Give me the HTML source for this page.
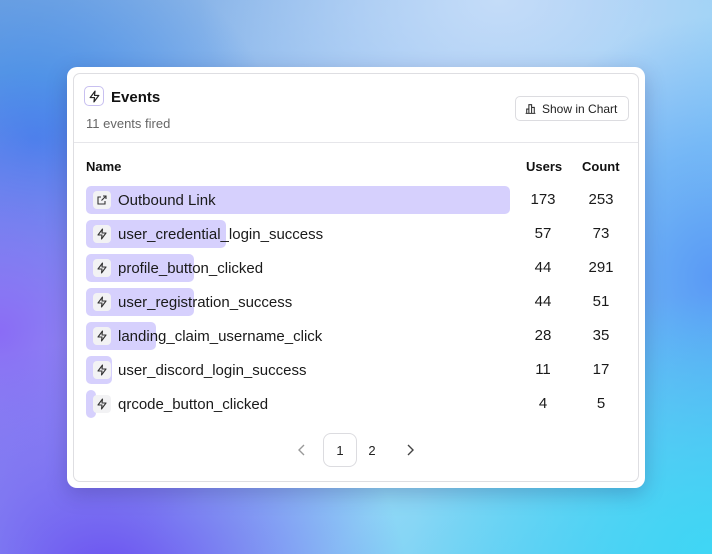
<!DOCTYPE html>
<html><head><style>
*{margin:0;padding:0;box-sizing:border-box}
body{width:712px;height:554px;overflow:hidden;font-family:"Liberation Sans",sans-serif;position:relative;
background:
radial-gradient(ellipse 300px 240px at 15% 105%,#6a4cf0 0%,rgba(106,76,240,0) 100%),
radial-gradient(ellipse 260px 260px at 0% 60%,#8a6cf5 0%,rgba(138,108,245,0) 100%),
radial-gradient(ellipse 240px 200px at 5% 25%,#3a86e8 0%,rgba(58,134,232,0) 100%),
radial-gradient(ellipse 300px 260px at 100% 100%,#3fd6f5 0%,rgba(63,214,245,0) 100%),
radial-gradient(ellipse 220px 260px at 100% 50%,#5a9af5 0%,rgba(90,154,245,0) 100%),
radial-gradient(ellipse 300px 200px at 70% 0%,#c4dcf8 0%,rgba(196,220,248,0) 100%),
linear-gradient(135deg,#7aa8e0 0%,#9ec6f4 40%,#8fd8f6 70%,#55c8f0 100%);}
.card{position:absolute;left:67px;top:67px;width:578px;height:421px;background:#fff;border-radius:10px;box-shadow:0 6px 20px rgba(40,30,100,.25)}
.inner{position:absolute;left:6px;top:6px;width:566px;height:409px;border:1px solid #dedee2;border-radius:7px}
.abs{position:absolute}
.t{color:#111;white-space:nowrap}
.bar{position:absolute;left:86px;height:28px;background:#d6d0fd;border-radius:5px}
.ib{position:absolute;left:93px;width:18px;height:18px;background:#f2f2f4;border-radius:4px;display:flex;align-items:center;justify-content:center}
.nm{position:absolute;left:118px;font-size:15px;color:#1a1a1a}
.num{position:absolute;font-size:15px;color:#1a1a1a;text-align:center;width:40px}
</style></head><body>
<div class="card"><div class="inner"></div></div>
<div class="abs" style="left:84px;top:86px;width:20px;height:20px;border:1px solid #c8c0f0;border-radius:5px;display:flex;align-items:center;justify-content:center">
<svg width="13" height="13" viewBox="0 0 24 24" fill="none" stroke="#222" stroke-width="2.2" stroke-linejoin="round"><path d="M13 2L4 14h8l-1 8 9-12h-8z"/></svg></div>
<div class="abs t" style="left:111px;top:89px;font-size:15px;font-weight:bold">Events</div>
<div class="abs" style="left:86px;top:116px;font-size:13px;color:#666">11 events fired</div>
<div class="abs" style="left:515px;top:96px;width:114px;height:25px;border:1px solid #dcdce0;border-radius:5px;font-size:12px;color:#222;display:flex;align-items:center;padding-left:8px">
<svg width="13" height="13" viewBox="0 0 24 24" fill="none" stroke="#333" stroke-width="2"><path d="M3 21h18M5 21v-8h4v8M9 21V5h5v16M14 21v-11h5v11"/></svg><span style="margin-left:5px">Show in Chart</span></div>
<div class="abs" style="left:74px;top:142px;width:564px;height:1px;background:#e6e6ea"></div>
<div class="abs t" style="left:86px;top:159px;font-size:13px;font-weight:bold">Name</div>
<div class="abs t" style="left:526px;top:159px;font-size:13px;font-weight:bold">Users</div>
<div class="abs t" style="left:582px;top:159px;font-size:13px;font-weight:bold">Count</div>

<div class="bar" style="top:186px;width:424px"></div>
<div class="bar" style="top:220px;width:140px"></div>
<div class="bar" style="top:254px;width:108px"></div>
<div class="bar" style="top:288px;width:108px"></div>
<div class="bar" style="top:322px;width:70px"></div>
<div class="bar" style="top:356px;width:26px"></div>
<div class="bar" style="top:390px;width:10px"></div>

<div class="ib" style="top:191px"><svg width="12" height="12" viewBox="0 0 24 24" fill="none" stroke="#333" stroke-width="2.2"><path d="M14 4h6v6M20 4l-9 9M18 14v6H4V6h6"/></svg></div>
<div class="ib" style="top:225px"><svg width="12" height="12" viewBox="0 0 24 24" fill="none" stroke="#333" stroke-width="2.2" stroke-linejoin="round"><path d="M13 2L4 14h8l-1 8 9-12h-8z"/></svg></div>
<div class="ib" style="top:259px"><svg width="12" height="12" viewBox="0 0 24 24" fill="none" stroke="#333" stroke-width="2.2" stroke-linejoin="round"><path d="M13 2L4 14h8l-1 8 9-12h-8z"/></svg></div>
<div class="ib" style="top:293px"><svg width="12" height="12" viewBox="0 0 24 24" fill="none" stroke="#333" stroke-width="2.2" stroke-linejoin="round"><path d="M13 2L4 14h8l-1 8 9-12h-8z"/></svg></div>
<div class="ib" style="top:327px"><svg width="12" height="12" viewBox="0 0 24 24" fill="none" stroke="#333" stroke-width="2.2" stroke-linejoin="round"><path d="M13 2L4 14h8l-1 8 9-12h-8z"/></svg></div>
<div class="ib" style="top:361px"><svg width="12" height="12" viewBox="0 0 24 24" fill="none" stroke="#333" stroke-width="2.2" stroke-linejoin="round"><path d="M13 2L4 14h8l-1 8 9-12h-8z"/></svg></div>
<div class="ib" style="top:395px"><svg width="12" height="12" viewBox="0 0 24 24" fill="none" stroke="#333" stroke-width="2.2" stroke-linejoin="round"><path d="M13 2L4 14h8l-1 8 9-12h-8z"/></svg></div>

<div class="nm" style="top:192px">Outbound Link</div>
<div class="nm" style="top:226px">user_credential_login_success</div>
<div class="nm" style="top:260px">profile_button_clicked</div>
<div class="nm" style="top:294px">user_registration_success</div>
<div class="nm" style="top:328px">landing_claim_username_click</div>
<div class="nm" style="top:362px">user_discord_login_success</div>
<div class="nm" style="top:396px">qrcode_button_clicked</div>

<div class="num" style="left:523px;top:191px">173</div><div class="num" style="left:581px;top:191px">253</div>
<div class="num" style="left:523px;top:225px">57</div><div class="num" style="left:581px;top:225px">73</div>
<div class="num" style="left:523px;top:259px">44</div><div class="num" style="left:581px;top:259px">291</div>
<div class="num" style="left:523px;top:293px">44</div><div class="num" style="left:581px;top:293px">51</div>
<div class="num" style="left:523px;top:327px">28</div><div class="num" style="left:581px;top:327px">35</div>
<div class="num" style="left:523px;top:361px">11</div><div class="num" style="left:581px;top:361px">17</div>
<div class="num" style="left:523px;top:395px">4</div><div class="num" style="left:581px;top:395px">5</div>

<svg class="abs" style="left:297px;top:444px" width="10" height="12" viewBox="0 0 10 12" fill="none" stroke="#999" stroke-width="1.4"><path d="M7 1L2 6l5 5"/></svg>
<div class="abs" style="left:323px;top:433px;width:34px;height:34px;border:1px solid #dcdce0;border-radius:8px;font-size:13px;display:flex;align-items:center;justify-content:center;color:#222">1</div>
<div class="abs" style="left:362px;top:443px;width:20px;font-size:13px;text-align:center;color:#222">2</div>
<svg class="abs" style="left:405px;top:444px" width="10" height="12" viewBox="0 0 10 12" fill="none" stroke="#444" stroke-width="1.4"><path d="M3 1l5 5-5 5"/></svg>
</body></html>
